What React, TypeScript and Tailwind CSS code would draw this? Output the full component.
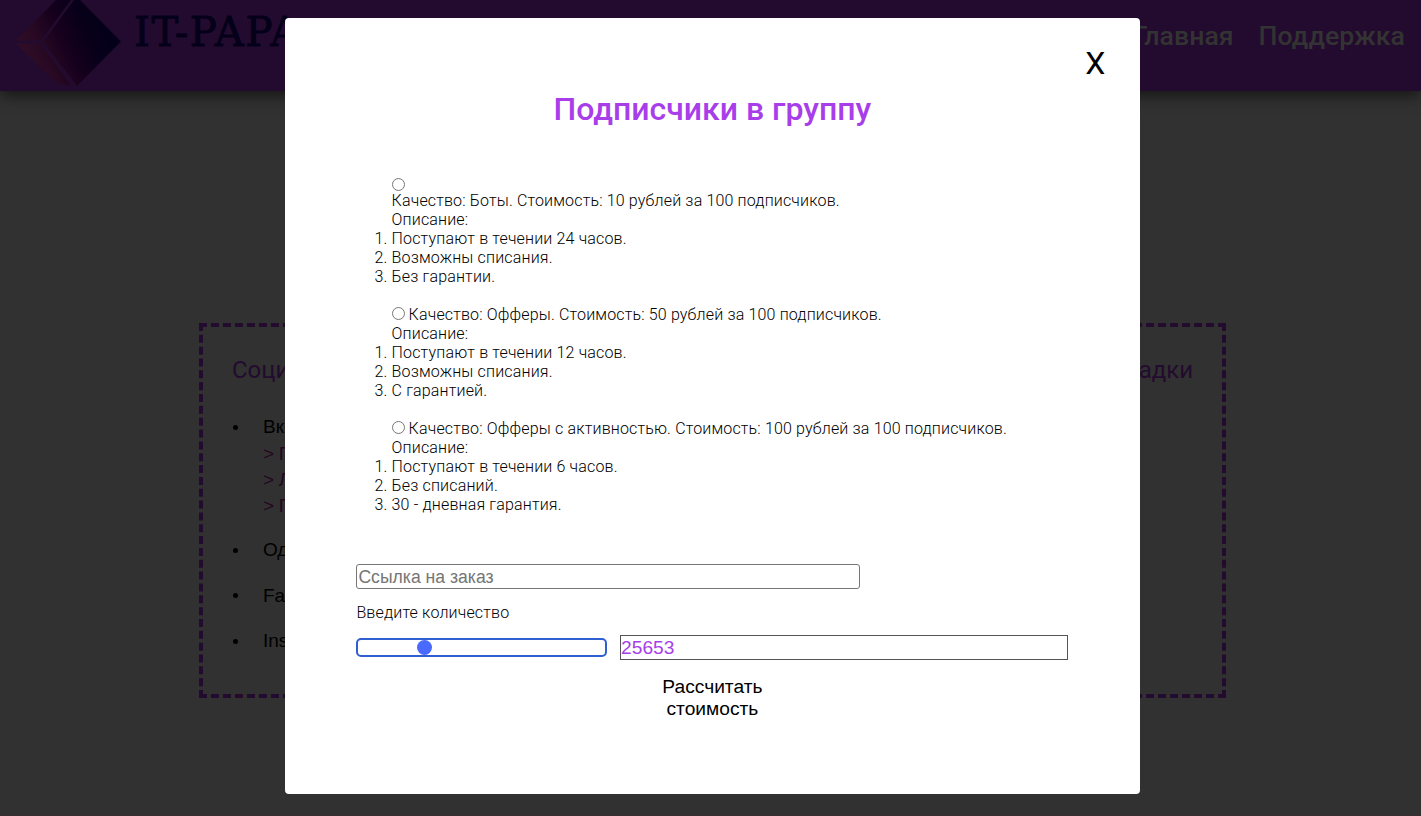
import { useState } from "react";

type Plan = { title: string; stacked?: boolean; notes: string[] };

const plans: Plan[] = [
  {
    title: "Качество: Боты. Стоимость: 10 рублей за 100 подписчиков.",
    stacked: true,
    notes: ["Поступают в течении 24 часов.", "Возможны списания.", "Без гарантии."],
  },
  {
    title: "Качество: Офферы. Стоимость: 50 рублей за 100 подписчиков.",
    notes: ["Поступают в течении 12 часов.", "Возможны списания.", "С гарантией."],
  },
  {
    title: "Качество: Офферы с активностью. Стоимость: 100 рублей за 100 подписчиков.",
    notes: ["Поступают в течении 6 часов.", "Без списаний.", "30 - дневная гарантия."],
  },
];

const networks = [
  { name: "Вконтакте", services: ["Группа", "Лайки", "Просмотр"] },
  { name: "Одноклассники", services: [] },
  { name: "Facebook", services: [] },
  { name: "Instagram", services: [] },
];

function Logo() {
  return (
    <svg width="122" height="91" viewBox="0 0 122 91" className="shrink-0">
      <defs>
        <linearGradient id="face" x1="15" y1="65" x2="100" y2="25" gradientUnits="userSpaceOnUse">
          <stop offset="0" stopColor="#35102a" />
          <stop offset="0.35" stopColor="#270822" />
          <stop offset="0.6" stopColor="#15001d" />
          <stop offset="0.85" stopColor="#08001a" />
          <stop offset="1" stopColor="#050019" />
        </linearGradient>
      </defs>
      <path d="M56 0L71 0L41 40.500L16 40.500Z" fill="url(#face)" />
      <path d="M74 0L80 0L121 41.500L77 86L43 42Z" fill="url(#face)" />
      <path d="M16 43.500L40.500 43.500L71 85.500Q60 85 53 80Z" fill="url(#face)" />
    </svg>
  );
}

function Header() {
  return (
    <header className="flex h-[91px] bg-[#230b2f] shadow-[0_4px_15px_rgba(0,0,0,0.6)]">
      <Logo />
      <div className="ml-[12px] mt-[5px] w-[240px] origin-left scale-x-[0.97] font-['DejaVu_Serif',serif] text-[41.5px] leading-[54px] tracking-[1.6px] text-[#050019] [-webkit-text-stroke:0.9px_#050019]">
        IT-PAPA
      </div>
      <nav className="ml-auto mr-[16px] mt-[16px] flex gap-[25px] font-[Roboto,sans-serif] text-[26.7px] font-medium leading-[40px] text-[#333333]">
        <a>Главная</a>
        <a>Поддержка</a>
      </nav>
    </header>
  );
}

function Networks() {
  return (
    <section className="ml-[199px] mt-[232px] h-[375px] w-[1027px] border-4 border-dashed border-[#230b2f] px-[29px] pt-[27px]">
      <div className="flex justify-between font-[Roboto,sans-serif] text-[24px] leading-[32px] text-[#230b2f]">
        <h2>Социальные</h2>
        <h2>Площадки</h2>
      </div>
      <ul className="mt-[28px] flex flex-col gap-[19.4px] font-['Liberation_Sans',sans-serif] text-[19px] leading-[26px] text-black">
        {networks.map((network) => (
          <li key={network.name} className="flex gap-[25px]">
            <span className="ml-px mt-[10.500px] size-[5px] shrink-0 rounded-full bg-black" />
            <div>
              {network.name}
              {network.services.length > 0 && (
                <div className="-mb-[1px] mt-[1px] tracking-[-0.3px] text-[#24061f]">
                  {network.services.map((service) => (
                    <p key={service}>&gt; {service}</p>
                  ))}
                </div>
              )}
            </div>
          </li>
        ))}
      </ul>
    </section>
  );
}

function PlanOption({ plan, checked, onSelect }: { plan: Plan; checked: boolean; onSelect: () => void }) {
  return (
    <div className="mb-[19px]">
      <label className={plan.stacked ? "flex flex-col" : "flex items-start gap-[4px]"}>
        <input
          type="radio"
          name="plan"
          checked={checked}
          onChange={onSelect}
          className={plan.stacked ? "size-[13px]" : "mt-[2px] size-[13px]"}
        />
        <span>{plan.title}</span>
      </label>
      <p>Описание:</p>
      <ol className="list-decimal">
        {plan.notes.map((note) => (
          <li key={note}>{note}</li>
        ))}
      </ol>
    </div>
  );
}

export default function App() {
  const [selected, setSelected] = useState(-1);
  const [amount, setAmount] = useState(25653);

  return (
    <div className="relative h-[816px] w-full overflow-hidden border-b-2 border-[#352f31] bg-[#313131]">
      <Header />
      <Networks />

      <div className="absolute inset-0 flex items-start pl-[285.400px] pt-[18.400px]">
        <div className="flex h-[775.200px] w-[855px] flex-col rounded-[4px] bg-white pl-[71px] pr-[72px] font-[Roboto,sans-serif] text-black">
          <button className="mr-[-37px] mt-[25px] self-end text-[32px] font-normal leading-[40px]">X</button>
          <h1 className="mt-[7px] text-center text-[32px] font-medium leading-[38px] text-[#a83eea]">
            Подписчики в группу
          </h1>

          <div className="ml-[35.200px] mt-[32px] pt-[18px] text-[16px] font-light leading-[19px] tracking-[0.16px]">
            {plans.map((plan, i) => (
              <PlanOption key={plan.title} plan={plan} checked={selected === i} onSelect={() => setSelected(i)} />
            ))}
          </div>

          <input
            placeholder="Ссылка на заказ"
            className="mt-[31px] h-[25px] w-[504px] shrink-0 rounded-[3px] border border-[#767676] px-px font-['Liberation_Sans',sans-serif] text-[17.6px] placeholder:text-[#757575]"
          />
          <p className="mt-[14px] text-[16px] font-light leading-[19px] tracking-[0.165px]">Введите количество</p>

          <div className="mt-[13px] flex items-center">
            <div className="flex h-[19px] w-[251px] items-center rounded-[5px] border-2 border-[#2f5fd0] pl-[58.500px]">
              <span className="size-[15px] rounded-full bg-[#4a69ff]" />
            </div>
            <input
              value={amount}
              onChange={(e) => setAmount(Number(e.target.value) || 0)}
              className="ml-[13px] h-[25px] w-[449px] border border-[#555555] font-['Liberation_Sans',sans-serif] text-[19.2px] text-[#a83eea]"
            />
          </div>

          <button className="mt-[16px] w-[120px] self-center font-['Liberation_Sans',sans-serif] text-[19.2px] leading-[22px]">
            Рассчитать стоимость
          </button>
        </div>
      </div>
    </div>
  );
}
